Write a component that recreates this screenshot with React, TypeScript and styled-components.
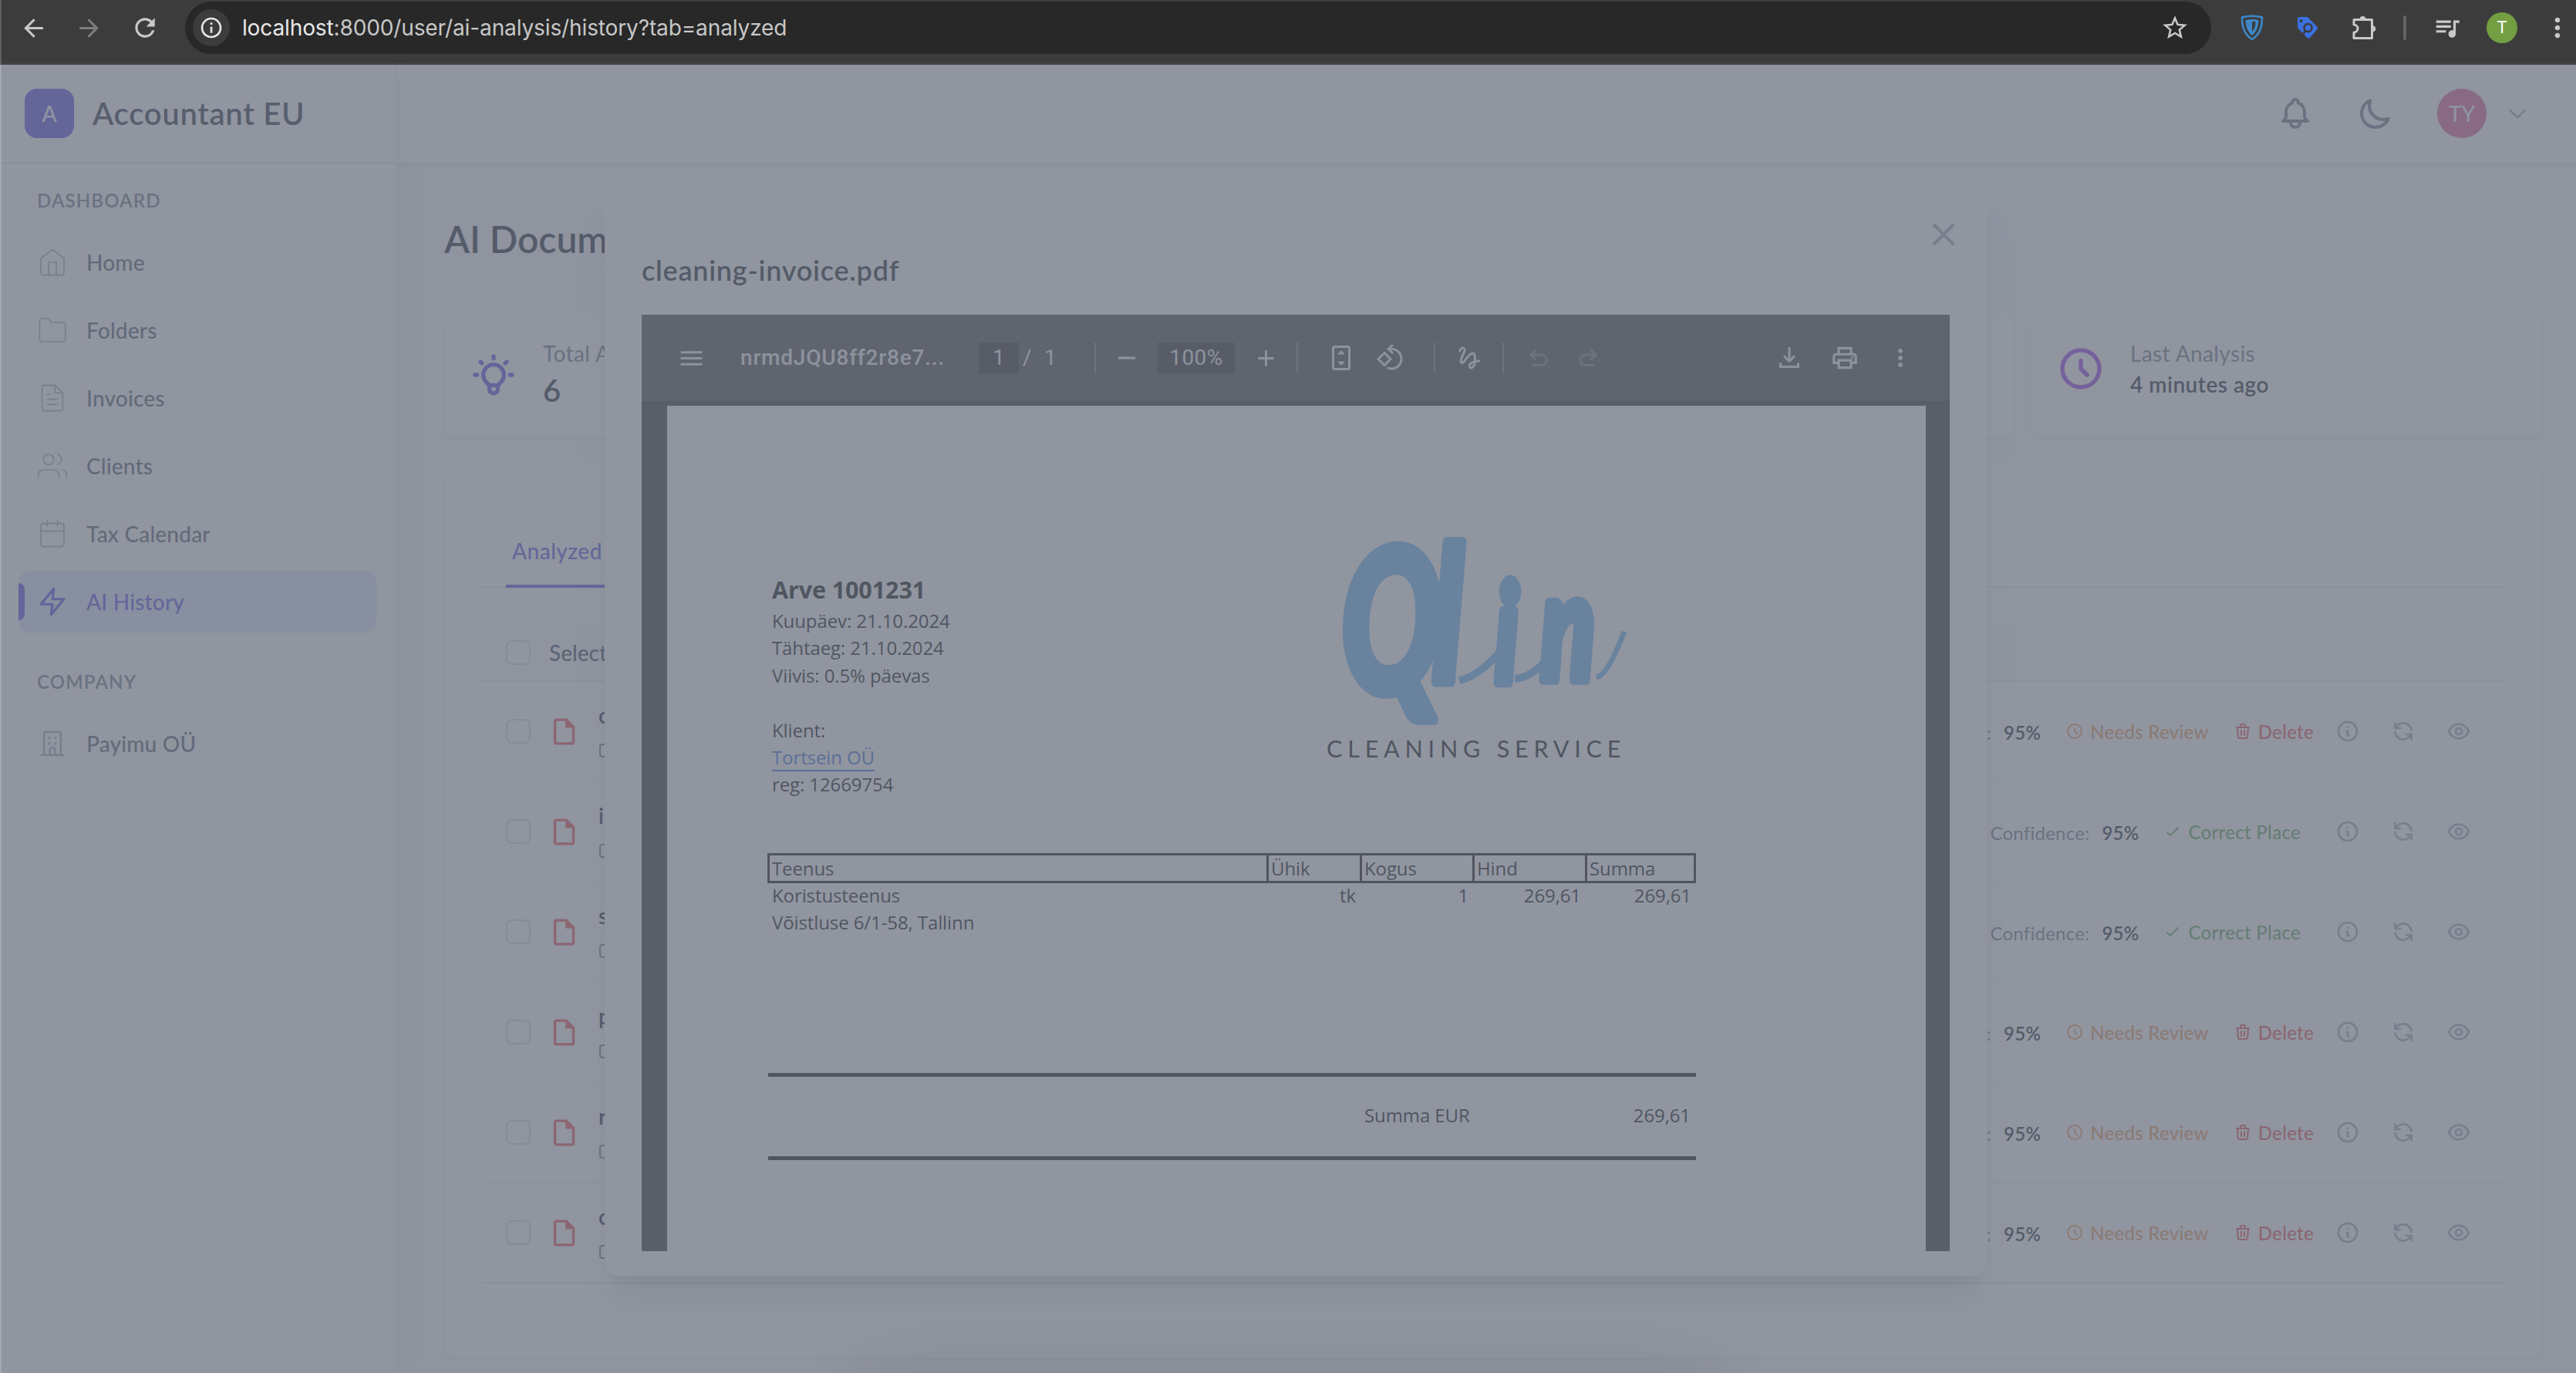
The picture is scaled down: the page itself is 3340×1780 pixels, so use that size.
import React from "react";
import styled, { createGlobalStyle, css } from "styled-components";
import {
  MdArrowBack,
  MdArrowForward,
  MdRefresh,
  MdInfoOutline,
  MdStarBorder,
  MdQueueMusic,
  MdMoreVert,
  MdMenu,
  MdRemove,
  MdAdd,
  MdOutlinePrint,
  MdOutlineInsertDriveFile,
} from "react-icons/md";
import { FiHome, FiFolder, FiFileText, FiUsers, FiCalendar, FiZap } from "react-icons/fi";

const gray = {
  50: "#f9fafb",
  100: "#f3f4f6",
  200: "#e5e7eb",
  300: "#d1d5db",
  400: "#9ca3af",
  500: "#6b7280",
  600: "#4b5563",
  700: "#374151",
  900: "#111827",
};
const indigo = "#4f46e5";

const GlobalStyle = createGlobalStyle`
  *, *::before, *::after { box-sizing: border-box; }
  html, body { margin: 0; padding: 0; background: #9095a0; }
  body { font-family: Lato, "Open Sans", sans-serif; overflow: hidden; }
  svg { display: block; flex: none; }
`;

const Window = styled.div`
  position: relative;
  width: 3340px;
  height: 1780px;
  display: flex;
  flex-direction: column;
  overflow: hidden;
`;

/* ---------- browser chrome ---------- */

const Chrome = styled.header`
  height: 84px;
  flex: none;
  display: flex;
  align-items: flex-start;
  padding: 2px 4px 0 24px;
  background: #3c3c3c;
  border-bottom: 2px solid #464644;
`;

const ChromeIcon = styled.span<{ $dim?: boolean; $ml?: number }>`
  display: flex;
  align-items: center;
  justify-content: center;
  width: 40px;
  height: 68px;
  margin-left: ${(p) => p.$ml ?? 0}px;
  color: ${(p) => (p.$dim ? "#7c7c7c" : "#c9c9c9")};
`;

const Omnibox = styled.div`
  display: flex;
  align-items: center;
  width: 2628px;
  height: 68px;
  margin-left: 32px;
  padding: 0 28px 0 10px;
  border-radius: 34px;
  background: #282828;
  color: #c9c9c9;
`;

const SiteInfo = styled.span`
  display: flex;
  align-items: center;
  justify-content: center;
  width: 48px;
  height: 48px;
  border-radius: 50%;
  background: #3c3c3c;
  color: #e6e6e6;
`;

const Url = styled.span`
  flex: 1;
  margin-left: 16px;
  font: 400 28px/40px Inter, sans-serif;
  letter-spacing: -0.12px;
  color: #c7c7c7;
  b {
    font-weight: 400;
    color: #e8e8e8;
  }
`;

const ChromeDivider = styled.span`
  width: 4px;
  height: 32px;
  margin: 18px 0 0 30px;
  border-radius: 2px;
  background: #636363;
`;

const Profile = styled.span`
  display: flex;
  align-items: center;
  justify-content: center;
  width: 40px;
  height: 40px;
  margin: 14px 0 0 31px;
  border-radius: 50%;
  background: #739e42;
  color: #fff;
  font: 400 22px/1 Roboto, sans-serif;
`;

/* ---------- app shell ---------- */

const Page = styled.div`
  position: relative;
  flex: 1;
  display: flex;
  background: ${gray[50]};
  overflow: hidden;
`;

const Sidebar = styled.aside`
  position: relative;
  z-index: 1;
  width: 514px;
  flex: none;
  background: #fff;
  border-right: 2px solid ${gray[100]};
  box-shadow: 8px 0 30px rgba(0, 0, 0, 0.05);
`;

const Brand = styled.div`
  display: flex;
  align-items: center;
  height: 128px;
  padding: 0 32px;
  gap: 24px;
  border-bottom: 2px solid ${gray[200]};
`;

const BrandMark = styled.span`
  display: flex;
  align-items: center;
  justify-content: center;
  width: 64px;
  height: 64px;
  border-radius: 16px;
  background: ${indigo};
  color: #fff;
  font-size: 28px;
  font-weight: 500;
`;

const BrandName = styled.span`
  font-size: 40px;
  font-weight: 600;
  letter-spacing: 0.7px;
  color: #1f2937;
`;

const Nav = styled.nav`
  display: flex;
  flex-direction: column;
  gap: 8px;
  padding: 16px 24px 0;
`;

const NavLabel = styled.h4<{ $mt?: number }>`
  margin: ${(p) => p.$mt ?? 0}px 0 0;
  height: 64px;
  padding: 0 24px;
  font-size: 24px;
  line-height: 64px;
  font-weight: 600;
  letter-spacing: 1.15px;
  text-transform: uppercase;
  color: ${gray[500]};
`;

const NavItem = styled.a<{ $active?: boolean }>`
  position: relative;
  display: flex;
  align-items: center;
  gap: 24px;
  height: 80px;
  padding: 0 24px;
  border-radius: 16px;
  font-size: 28px;
  font-weight: 500;
  letter-spacing: 0.2px;
  color: ${gray[600]};
  svg {
    color: ${gray[400]};
  }
  ${(p) =>
    p.$active &&
    css`
      background: #e0e7ff;
      color: ${indigo};
      box-shadow: 0 2px 4px rgba(0, 0, 0, 0.05);
      svg {
        color: ${indigo};
      }
      &::before {
        content: "";
        position: absolute;
        left: 0;
        top: 16px;
        width: 8px;
        height: 48px;
        border-radius: 0 8px 8px 0;
        background: ${indigo};
      }
    `}
`;

const Main = styled.main`
  flex: 1;
  min-width: 0;
`;

const Topbar = styled.div`
  display: flex;
  align-items: center;
  justify-content: flex-end;
  height: 130px;
  padding: 0 60px 2px 0;
  background: #fff;
  border-bottom: 2px solid ${gray[200]};
  box-shadow: 0 2px 6px rgba(0, 0, 0, 0.06);
  color: ${gray[500]};
`;

const TopbarIcons = styled.div`
  display: flex;
  gap: 56px;
`;

const Avatar = styled.span`
  display: flex;
  align-items: center;
  justify-content: center;
  width: 64px;
  height: 64px;
  margin: 0 24px 0 56px;
  border-radius: 50%;
  background: #df5690;
  color: #fff;
  font-size: 28px;
  font-weight: 400;
`;

const Caret = styled.span`
  color: ${gray[400]};
`;

const Content = styled.section`
  padding: 64px 44px 0 62px;
`;

const PageTitle = styled.h1`
  margin: 0 0 64px;
  height: 64px;
  font-size: 48px;
  line-height: 64px;
  font-weight: 600;
  color: ${gray[900]};
`;

const Stats = styled.div`
  display: grid;
  grid-template-columns: repeat(4, 1fr);
  gap: 24px;
`;

const Card = styled.div`
  display: flex;
  align-items: flex-start;
  height: 160px;
  padding: 32px;
  gap: 32px;
  border-radius: 16px;
  background: #fff;
  box-shadow: 0 2px 4px rgba(0, 0, 0, 0.06);
`;

const StatIcon = styled.span<{ $h: number; $color: string }>`
  display: flex;
  align-items: center;
  height: ${(p) => p.$h}px;
  color: ${(p) => p.$color};
`;

const StatLabel = styled.div`
  font-size: 28px;
  line-height: 40px;
  font-weight: 400;
  letter-spacing: 0.4px;
  color: ${gray[500]};
`;

const StatValue = styled.div<{ $big?: boolean }>`
  font-size: ${(p) => (p.$big ? 40 : 28)}px;
  line-height: ${(p) => (p.$big ? 56 : 40)}px;
  font-weight: 600;
  letter-spacing: 0.5px;
  color: ${gray[900]};
`;

const Panel = styled.div`
  height: 1162px;
  margin-top: 32px;
  padding: 80px 48px 0;
  border-radius: 16px;
  background: #fff;
  box-shadow: 0 2px 4px rgba(0, 0, 0, 0.06);
`;

const Tabs = styled.div`
  display: flex;
  gap: 64px;
  height: 84px;
  padding: 0 32px;
  border-bottom: 2px solid ${gray[200]};
`;

const Tab = styled.span<{ $active?: boolean }>`
  height: 84px;
  padding: 16px 8px 0;
  font-size: 28px;
  line-height: 40px;
  font-weight: 500;
  letter-spacing: 0.5px;
  color: ${(p) => (p.$active ? indigo : gray[500])};
  border-bottom: 4px solid ${(p) => (p.$active ? indigo : "transparent")};
`;

const ListHead = styled.div`
  display: flex;
  align-items: center;
  gap: 24px;
  height: 74px;
  margin-top: 48px;
  padding: 0 32px;
  background: ${gray[50]};
  border-bottom: 2px solid ${gray[200]};
  font-size: 28px;
  font-weight: 500;
  color: ${gray[700]};
`;

const Checkbox = styled.span`
  width: 32px;
  height: 32px;
  flex: none;
  border: 2px solid ${gray[300]};
  border-radius: 8px;
  background: #fff;
`;

const Row = styled.div<{ $last?: boolean }>`
  display: flex;
  align-items: center;
  height: 130px;
  padding: 0 44px 0 32px;
  border-bottom: 2px solid ${(p) => (p.$last ? gray[200] : gray[100])};
`;

const RowFile = styled.span`
  margin: 0 24px 0 23px;
  color: #ef4444;
`;

const RowText = styled.div`
  flex: 1;
  padding-bottom: 4px;
`;

const RowName = styled.div`
  font-size: 28px;
  line-height: 40px;
  font-weight: 600;
  color: ${gray[900]};
`;

const RowMeta = styled.div`
  display: flex;
  align-items: center;
  height: 24px;
  margin-top: 14px;
  color: ${gray[500]};
`;

const Confidence = styled.span`
  display: flex;
  gap: 16px;
  padding-top: 3px;
  font-size: 24px;
  letter-spacing: 0.25px;
  color: ${gray[500]};
  b {
    font-weight: 600;
    color: ${gray[900]};
  }
`;

const Badge = styled.span<{ $color: string; $mr?: number }>`
  display: flex;
  align-items: center;
  gap: 8px;
  margin: 0 ${(p) => p.$mr ?? 0}px 0 32px;
  font-size: 24px;
  font-weight: 500;
  letter-spacing: 0.3px;
  color: ${(p) => p.$color};
`;

const RowActions = styled.span`
  display: flex;
  gap: 40px;
  color: ${gray[400]};
`;

/* ---------- modal ---------- */

const Modal = styled.div`
  position: absolute;
  z-index: 2;
  left: 784px;
  top: 164px;
  width: 1792px;
  height: 1406px;
  padding: 78px 48px 32px;
  border-radius: 16px;
  background: #fff;
  box-shadow: 0 40px 50px -10px rgba(0, 0, 0, 0.12), 0 16px 20px -10px rgba(0, 0, 0, 0.12);
`;

const CloseButton = styled.span`
  position: absolute;
  right: 32px;
  top: 32px;
  color: ${gray[400]};
`;

const ModalTitle = styled.h3`
  margin: 0 0 34px;
  font-size: 36px;
  line-height: 48px;
  font-weight: 600;
  letter-spacing: 0.75px;
  color: ${gray[900]};
`;

const Viewer = styled.div`
  display: flex;
  flex-direction: column;
  height: 1214px;
  background: #282828;
  overflow: hidden;
`;

const ViewerBar = styled.div`
  display: flex;
  align-items: center;
  flex: none;
  height: 112px;
  padding-right: 44px;
  background: #3c3c3c;
  color: #f1f1f1;
  font: 400 28px/40px Roboto, sans-serif;
  box-shadow: 0 2px 8px rgba(0, 0, 0, 0.3);
`;

const Tool = styled.span<{ $ml: number; $dim?: boolean }>`
  display: flex;
  align-items: center;
  justify-content: center;
  width: 40px;
  height: 40px;
  margin-left: ${(p) => p.$ml}px;
  opacity: ${(p) => (p.$dim ? 0.32 : 1)};
`;

const ToolName = styled.span`
  width: 266px;
  margin-left: 44px;
  font-weight: 500;
  letter-spacing: 0.8px;
  white-space: nowrap;
`;

const ToolField = styled.span<{ $w: number; $ml: number; $plain?: boolean }>`
  width: ${(p) => p.$w}px;
  height: 40px;
  margin-left: ${(p) => p.$ml}px;
  background: ${(p) => (p.$plain ? "transparent" : "#1e1e1e")};
  text-align: center;
  letter-spacing: 0.4px;
`;

const ToolDivider = styled.span<{ $ml: number }>`
  width: 2px;
  height: 40px;
  margin-left: ${(p) => p.$ml}px;
  background: #757575;
`;

const Spacer = styled.span`
  flex: 1;
`;

const Sheet = styled.div`
  flex: none;
  width: 1632px;
  height: 1200px;
  margin: 6px 0 0 33px;
  padding: 174px 298px 0 131px;
  background: #fff;
  color: #000;
  font: 400 24px/35.4px "Open Sans", sans-serif;
  letter-spacing: -0.1px;
`;

const SheetTop = styled.div`
  display: flex;
  justify-content: space-between;
  height: 406px;
`;

const Client = styled.div`
  padding: 41px 0 0 5px;
`;

const InvoiceTitle = styled.div`
  font-size: 30.5px;
  line-height: 46px;
  font-weight: 700;
  letter-spacing: -0.1px;
`;

const Line = styled.div<{ $gap?: boolean }>`
  margin-top: ${(p) => (p.$gap ? 35.4 : 0)}px;
`;

const ClientLink = styled.a`
  color: #2f6ad8;
  border-bottom: 2px solid #2f6ad8;
  line-height: 28px;
`;

const Logo = styled.div`
  width: 384px;
  margin-right: 95px;
`;

const LogoCaption = styled.div`
  font: 400 30.5px/40px Lato, sans-serif;
  letter-spacing: 6.8px;
  white-space: nowrap;
`;

const ItemGrid = styled.div<{ $head?: boolean }>`
  display: grid;
  grid-template-columns: 647px 121px 146px 146px 1fr;
  ${(p) =>
    p.$head
      ? css`
          height: 39px;
          margin-left: -1px;
          border: 3px solid #000;
          line-height: 33px;
          span {
            padding-left: 3px;
            border-right: 3px solid #000;
          }
          span:last-child {
            border-right: 0;
          }
        `
      : css`
          position: relative;
          top: -2px;
          line-height: 35.4px;
          span {
            padding: 0 6px 0 5px;
            text-align: right;
            white-space: nowrap;
          }
          span:first-child {
            text-align: left;
          }
        `}
`;

const Totals = styled.div`
  display: flex;
  justify-content: space-between;
  align-items: center;
  height: 113px;
  margin-top: 175px;
  padding: 0 7px 4px 773px;
  border-top: 5px solid #000;
  border-bottom: 5px solid #000;
`;

const Backdrop = styled.div`
  position: absolute;
  z-index: 3;
  inset: 0;
  background: rgba(107, 114, 128, 0.75);
`;

const WindowEdge = styled.div`
  position: absolute;
  z-index: 4;
  left: 0;
  top: 0;
  width: 2px;
  height: 1780px;
  background: rgba(255, 255, 255, 0.18);
`;

const DockShadow = styled.div`
  position: absolute;
  z-index: 4;
  left: 1120px;
  top: 1800px;
  width: 1100px;
  height: 60px;
  box-shadow: 0 0 90px rgba(50, 40, 45, 0.2);
`;

/* ---------- icons ---------- */

type IconProps = { d: string; size: number; sw?: number };
const Icon = ({ d, size, sw = 2 }: IconProps) => (
  <svg
    width={size}
    height={size}
    viewBox="0 0 24 24"
    fill="none"
    stroke="currentColor"
    strokeWidth={sw}
    strokeLinecap="round"
    strokeLinejoin="round"
  >
    <path d={d} />
  </svg>
);

const paths = {
  bell: "M15 17h5l-1.405-1.405A2.032 2.032 0 0118 14.158V11a6.002 6.002 0 00-4-5.659V5a2 2 0 10-4 0v.341C7.67 6.165 6 8.388 6 11v3.159c0 .538-.214 1.055-.595 1.436L4 17h5m6 0v1a3 3 0 11-6 0v-1m6 0H9",
  moon: "M20.354 15.354A9 9 0 018.646 3.646 9.003 9.003 0 0012 21a9.003 9.003 0 008.354-5.646z",
  chevron: "M19 9l-7 7-7-7",
  bulb: "M9.663 17h4.673M12 3v1m6.364 1.636l-.707.707M21 12h-1M4 12H3m3.343-5.657l-.707-.707m2.828 9.9a5 5 0 117.072 0l-.548.547A3.374 3.374 0 0014 18.469V19a2 2 0 11-4 0v-.531c0-.895-.356-1.754-.988-2.386l-.548-.547z",
  clock: "M12 8v4l3 3m6-3a9 9 0 11-18 0 9 9 0 0118 0z",
  close: "M6 18L18 6M6 6l12 12",
  info: "M13 16h-1v-4h-1m1-4h.01M21 12a9 9 0 11-18 0 9 9 0 0118 0z",
  refresh:
    "M4 4v5h.582m15.356 2A8.001 8.001 0 004.582 9m0 0H9m11 11v-5h-.581m0 0a8.003 8.003 0 01-15.357-2m15.357 2H15",
  eye: "M15 12a3 3 0 11-6 0 3 3 0 016 0z M2.458 12C3.732 7.943 7.523 5 12 5c4.478 0 8.268 2.943 9.542 7-1.274 4.057-5.064 7-9.542 7-4.477 0-8.268-2.943-9.542-7z",
  check: "M5 13l4 4L19 7",
  trash:
    "M19 7l-.867 12.142A2 2 0 0116.138 21H7.862a2 2 0 01-1.995-1.858L5 7m5 4v6m4-6v6m1-10V4a1 1 0 00-1-1h-4a1 1 0 00-1 1v3M4 7h16",
};

const Building = () => (
  <svg width="40" height="40" viewBox="0 0 24 24" fill="none" stroke="currentColor" strokeWidth="1.5" strokeLinecap="round">
    <path d="M5.5 21V4.500a1.500 1.500 0 011.500-1.500h10a1.500 1.500 0 011.500 1.500V21M3.500 21h17M10 21v-4a2 2 0 014 0v4" />
    <path strokeWidth="2" d="M9.500 7.500h.01M14.500 7.500h.01M9.500 12h.01M14.500 12h.01" />
  </svg>
);

const Shield = () => (
  <svg width="30" height="34" viewBox="0 0 30 34" fill="none" stroke="#3d87c9">
    <path strokeWidth="2.600" d="M2 3.500Q15 0 28 3.500C28 18 24 26 15 32C6 26 2 18 2 3.500Z" />
    <path fill="#3d87c9" stroke="none" d="M6.500 7Q15 5 23.500 7C23 17 20 23 15 27C10 23 7 17 6.500 7Z" />
    <path fill="#3c3c3c" stroke="none" d="M15 9h4.500c0 6-1.500 10-4.500 13z" />
  </svg>
);

const Tag = () => (
  <svg width="28" height="30" viewBox="0 0 28 30">
    <path fill="#3a70e0" d="M1 3a2 2 0 012-2h10a3 3 0 012 1l11.500 12a2.500 2.500 0 010 3L17 28a2.500 2.500 0 01-3.500 0L2 16a3 3 0 01-1-2z" />
    <circle cx="5.500" cy="6" r="2" fill="#3c3c3c" />
    <circle cx="14.500" cy="15" r="5" fill="none" stroke="#3c3c3c" strokeWidth="2.600" />
    <path d="M11 19l-2.500 4" stroke="#3c3c3c" strokeWidth="2.600" />
  </svg>
);

const Puzzle = () => (
  <svg width="34" height="34" viewBox="0 0 34 34" fill="none" stroke="currentColor" strokeWidth="3" strokeLinejoin="round">
    <path d="M3 6.500h23.500v24H3v-7.500a5 5 0 000-10z" />
    <path fill="currentColor" stroke="none" d="M10.500 6a4 4 0 018 0zM27 14a4.300 4.300 0 010 8.600z" />
  </svg>
);

const FitPage = () => (
  <svg width="24" height="32" viewBox="0 0 24 32">
    <rect x="1.500" y="1.500" width="21" height="29" rx="2" fill="none" stroke="currentColor" strokeWidth="3" />
    <path fill="currentColor" d="M12 6l5 5.500H7zM12 26l5-5.500H7z" />
  </svg>
);

const Rotate = () => (
  <svg width="36" height="34" viewBox="0 0 36 34" fill="none" stroke="currentColor" strokeWidth="3">
    <path d="M11 10.500l8 8-8 8-8-8z" />
    <path d="M16 5.500h4.500a12.700 12.700 0 11-6 24" />
    <path d="M22 0l-6 5.500 6 5.500" />
  </svg>
);

const Draw = () => (
  <svg width="30" height="30" viewBox="0 0 30 30" fill="none" stroke="currentColor" strokeWidth="3" strokeLinecap="round">
    <path d="M2.500 6C4 2 8 0.500 9 4C10 8 2 17 4.500 21C7.500 24.500 14 8.500 19.500 9C24.500 10 23 28 17.500 28C12.500 27 15 19 28 19" />
  </svg>
);

const Undo = () => (
  <svg width="26" height="24" viewBox="0 0 26 24" fill="none" stroke="currentColor" strokeWidth="3">
    <path d="M9.500 1.500L3 8l6.500 6.500M3.500 8h13a6.800 6.800 0 010 13.600H5" />
  </svg>
);

const Redo = () => (
  <svg width="26" height="24" viewBox="0 0 26 24" fill="none" stroke="currentColor" strokeWidth="3">
    <path d="M16.500 1.500L23 8l-6.500 6.500M22.500 8h-13a6.800 6.800 0 000 13.600H21" />
  </svg>
);

const Download = () => (
  <svg width="26" height="28" viewBox="0 0 26 28" fill="none" stroke="currentColor" strokeWidth="3">
    <path d="M13 0v18M6 11.500l7 7 7-7M1.500 20.500v5h23v-5" />
  </svg>
);

const QlinMark = () => (
  <svg width="384" height="250" viewBox="0 0 384 250" overflow="visible">
    <g transform="translate(19 0) scale(0.75 1.120)">
      <text
        fill="#63b4f6"
        stroke="#63b4f6"
        strokeWidth="12"
        strokeLinejoin="round"
        fontFamily="Lato"
        fontStyle="italic"
        fontWeight="900"
        letterSpacing="0"
      >
        <tspan x="0" y="176" fontSize="230">Q</tspan>
        <tspan x="158" y="164" fontSize="217">l</tspan>
        <tspan x="266" y="164" fontSize="158">i</tspan>
        <tspan x="345" y="162" fontSize="172">n</tspan>
      </text>
    </g>
    <g fill="none" stroke="#63b4f6" strokeWidth="10">
      <path d="M172 182Q195 178 224 146" />
      <path d="M244 180Q268 178 290 150" />
      <path d="M350 178Q364 176 386 119" strokeWidth="7" />
    </g>
  </svg>
);

/* ---------- data ---------- */

const menu = [
  { label: "Home", icon: FiHome },
  { label: "Folders", icon: FiFolder },
  { label: "Invoices", icon: FiFileText },
  { label: "Clients", icon: FiUsers },
  { label: "Tax Calendar", icon: FiCalendar },
  { label: "AI History", icon: FiZap, active: true },
];

const files = [
  { name: "cleaning", ok: false },
  { name: "invoice", ok: true },
  { name: "statement", ok: true },
  { name: "payment", ok: false },
  { name: "receipt", ok: false },
  { name: "cleaning", ok: false },
];

const FileRow = ({ name, ok, last }: { name: string; ok: boolean; last: boolean }) => (
  <Row $last={last}>
    <Checkbox />
    <RowFile>
      <MdOutlineInsertDriveFile size={41} />
    </RowFile>
    <RowText>
      <RowName>{name}</RowName>
      <RowMeta>
        <svg width="24" height="20" viewBox="0 0 24 20" fill="none" stroke="currentColor" strokeWidth="2">
          <rect x="2" y="2" width="20" height="16" rx="3" />
        </svg>
      </RowMeta>
    </RowText>
    <Confidence>
      Confidence: <b>95%</b>
    </Confidence>
    {ok ? (
      <Badge $color="#57a250" $mr={45}>
        <Icon d={paths.check} size={24} />
        Correct Place
      </Badge>
    ) : (
      <>
        <Badge $color="#eb9250">
          <Icon d={paths.clock} size={24} />
          Needs Review
        </Badge>
        <Badge $color="#e74644" $mr={28}>
          <Icon d={paths.trash} size={24} />
          Delete
        </Badge>
      </>
    )}
    <RowActions>
      <Icon d={paths.info} size={32} />
      <Icon d={paths.refresh} size={32} />
      <Icon d={paths.eye} size={32} />
    </RowActions>
  </Row>
);

const PdfViewer = () => (
  <Viewer>
    <ViewerBar>
      <Tool $ml={44}><MdMenu size={37} /></Tool>
      <ToolName>nrmdJQU8ff2r8e7...</ToolName>
      <ToolField $w={52} $ml={43}>1</ToolField>
      <ToolField $w={12} $ml={5} $plain>/</ToolField>
      <ToolField $w={20} $ml={14} $plain>1</ToolField>
      <ToolDivider $ml={47} />
      <Tool $ml={20}><MdRemove size={38} /></Tool>
      <ToolField $w={100} $ml={20}>100%</ToolField>
      <Tool $ml={20}><MdAdd size={35} /></Tool>
      <ToolDivider $ml={20} />
      <Tool $ml={36}><FitPage /></Tool>
      <Tool $ml={23}><Rotate /></Tool>
      <ToolDivider $ml={37} />
      <Tool $ml={24}><Draw /></Tool>
      <ToolDivider $ml={23} />
      <Tool $ml={25} $dim><Undo /></Tool>
      <Tool $ml={24} $dim><Redo /></Tool>
      <Spacer />
      <Tool $ml={0}><Download /></Tool>
      <Tool $ml={32}><MdOutlinePrint size={38} /></Tool>
      <Tool $ml={32}><MdMoreVert size={36} /></Tool>
    </ViewerBar>
    <Sheet>
      <SheetTop>
        <Client>
          <InvoiceTitle>Arve 1001231</InvoiceTitle>
          <Line>Kuupäev: 21.10.2024</Line>
          <Line>Tähtaeg: 21.10.2024</Line>
          <Line>Viivis: 0.5% päevas</Line>
          <Line $gap>Klient:</Line>
          <Line><ClientLink>Tortsein OÜ</ClientLink></Line>
          <Line>reg: 12669754</Line>
        </Client>
        <Logo>
          <QlinMark />
          <LogoCaption>CLEANING SERVICE</LogoCaption>
        </Logo>
      </SheetTop>
      <ItemGrid $head>
        <span>Teenus</span>
        <span>Ühik</span>
        <span>Kogus</span>
        <span>Hind</span>
        <span>Summa</span>
      </ItemGrid>
      <ItemGrid>
        <span>Koristusteenus</span>
        <span>tk</span>
        <span>1</span>
        <span>269,61</span>
        <span>269,61</span>
      </ItemGrid>
      <ItemGrid>
        <span>Võistluse 6/1-58, Tallinn</span>
      </ItemGrid>
      <Totals>
        <span>Summa EUR</span>
        <span>269,61</span>
      </Totals>
    </Sheet>
  </Viewer>
);

export default function App() {
  return (
    <Window>
      <GlobalStyle />
      <Chrome>
        <ChromeIcon><MdArrowBack size={37} /></ChromeIcon>
        <ChromeIcon $ml={32} $dim><MdArrowForward size={37} /></ChromeIcon>
        <ChromeIcon $ml={32}><MdRefresh size={38} /></ChromeIcon>
        <Omnibox>
          <SiteInfo><MdInfoOutline size={32} /></SiteInfo>
          <Url><b>localhost</b>:8000/user/ai-analysis/history?tab=analyzed</Url>
          <MdStarBorder size={38} />
        </Omnibox>
        <ChromeIcon $ml={33}><Shield /></ChromeIcon>
        <ChromeIcon $ml={32}><Tag /></ChromeIcon>
        <ChromeIcon $ml={34}><Puzzle /></ChromeIcon>
        <ChromeDivider />
        <ChromeIcon $ml={33}><MdQueueMusic size={38} /></ChromeIcon>
        <Profile>T</Profile>
        <ChromeIcon $ml={32}><MdMoreVert size={40} /></ChromeIcon>
      </Chrome>

      <Page>
        <Sidebar>
          <Brand>
            <BrandMark>A</BrandMark>
            <BrandName>Accountant EU</BrandName>
          </Brand>
          <Nav>
            <NavLabel>Dashboard</NavLabel>
            {menu.map(({ label, icon: MenuIcon, active }) => (
              <NavItem key={label} $active={active}>
                <MenuIcon size={40} strokeWidth={active ? 2 : 1} />
                {label}
              </NavItem>
            ))}
            <NavLabel $mt={24}>Company</NavLabel>
            <NavItem>
              <Building />
              Payimu OÜ
            </NavItem>
          </Nav>
        </Sidebar>

        <Main>
          <Topbar>
            <TopbarIcons>
              <Icon d={paths.bell} size={48} />
              <Icon d={paths.moon} size={48} />
            </TopbarIcons>
            <Avatar>TY</Avatar>
            <Caret><Icon d={paths.chevron} size={32} /></Caret>
          </Topbar>
          <Content>
            <PageTitle>AI Document Analysis</PageTitle>
            <Stats>
              <Card>
                <StatIcon $h={96} $color={indigo}><Icon d={paths.bulb} size={64} /></StatIcon>
                <div>
                  <StatLabel>Total Analyzed</StatLabel>
                  <StatValue $big>6</StatValue>
                </div>
              </Card>
              <Card />
              <Card />
              <Card>
                <StatIcon $h={80} $color="#9333ea"><Icon d={paths.clock} size={64} /></StatIcon>
                <div>
                  <StatLabel>Last Analysis</StatLabel>
                  <StatValue>4 minutes ago</StatValue>
                </div>
              </Card>
            </Stats>
            <Panel>
              <Tabs>
                <Tab $active>Analyzed</Tab>
              </Tabs>
              <ListHead>
                <Checkbox />
                Select All
              </ListHead>
              {files.map((file, i) => (
                <FileRow key={i} {...file} last={i === files.length - 1} />
              ))}
            </Panel>
          </Content>
        </Main>

        <Modal>
          <CloseButton><Icon d={paths.close} size={48} /></CloseButton>
          <ModalTitle>cleaning-invoice.pdf</ModalTitle>
          <PdfViewer />
        </Modal>
        <Backdrop />
      </Page>
      <DockShadow />
      <WindowEdge />
    </Window>
  );
}
